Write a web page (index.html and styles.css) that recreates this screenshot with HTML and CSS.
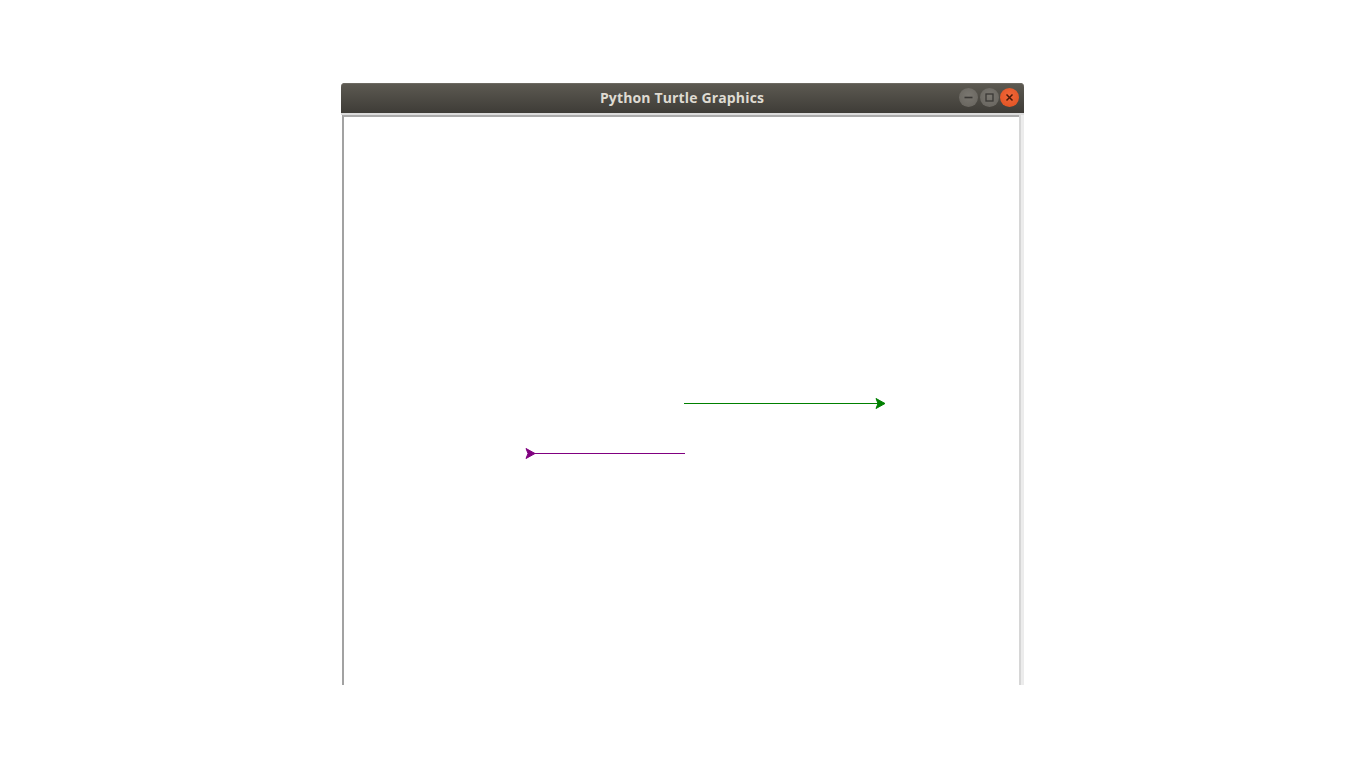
FILE: index.html
```html
<!DOCTYPE html>
<html>
<head>
<meta charset="utf-8">
<title>Python Turtle Graphics</title>
<link rel="stylesheet" href="styles.css">
</head>
<body>
<div class="window">
  <div class="titlebar">
    <span class="title">Python Turtle Graphics</span>
    <div class="controls">
      <span class="btn btn-min"><svg width="19" height="19" viewBox="0 0 19 19"><line x1="5.5" y1="9.5" x2="13.5" y2="9.5" stroke="#3a3835" stroke-width="1.6"/></svg></span>
      <span class="btn btn-max"><svg width="19" height="19" viewBox="0 0 19 19"><rect x="6" y="6" width="7" height="7" fill="none" stroke="#3a3835" stroke-width="1.3"/></svg></span>
      <span class="btn btn-close"><svg width="19" height="19" viewBox="0 0 19 19"><path d="M6.5 6.5 L12.5 12.5 M12.5 6.5 L6.5 12.5" stroke="#4a1a08" stroke-width="1.5"/></svg></span>
    </div>
  </div>
  <div class="body">
    <div class="canvas">
      <svg class="drawing" width="675" height="568" viewBox="0 0 675 568">
        <line x1="340" y1="286.5" x2="534" y2="286.5" stroke="#008000" stroke-width="1"/>
        <polygon points="541,286.5 532,281.5 534,286.5 532,291.5" fill="#008000" stroke="#008000" stroke-width="1"/>
        <line x1="189" y1="336.5" x2="341" y2="336.5" stroke="#800080" stroke-width="1"/>
        <polygon points="191,336.5 182,331.5 184,336.5 182,341.5" fill="#800080" stroke="#800080" stroke-width="1"/>
      </svg>
    </div>
    <div class="scrollstrip"></div>
  </div>
</div>
</body>
</html>
```

FILE: styles.css
```css
html, body {
  margin: 0;
  padding: 0;
  background: #ffffff;
  height: 768px;
  overflow: hidden;
}
body {
  padding: 83px 0 0 341px;
  box-sizing: border-box;
}
.window {
  width: 683px;
  height: 602px;
  display: flex;
  flex-direction: column;
}
.titlebar {
  height: 30px;
  flex: none;
  border-radius: 4px 4px 0 0;
  background: linear-gradient(#5d5a52, #3e3c37);
  box-shadow: inset 0 1px 0 #6d6a62;
  display: flex;
  align-items: center;
  justify-content: center;
  position: relative;
}
.title {
  font-family: "Open Sans", "DejaVu Sans", sans-serif;
  font-weight: bold;
  font-size: 14px;
  color: #dfdbd2;
  letter-spacing: 0.15px;
  margin-right: 1px;
  margin-bottom: 2px;
}
.controls {
  position: absolute;
  right: 5px;
  top: 5px;
  display: flex;
  gap: 1.5px;
}
.btn {
  width: 19px;
  height: 19px;
  border-radius: 50%;
  display: flex;
}
.btn-min, .btn-max {
  background: radial-gradient(circle at 50% 40%, #7a7770, #65625c);
}
.btn-close {
  background: radial-gradient(circle at 50% 40%, #f0673a, #e0501f);
}
.body {
  flex: 1;
  display: flex;
  border-top: 2px solid #dcdcdc;
  min-height: 0;
}
.canvas {
  flex: 1;
  background: #ffffff;
  border-left: 2px solid #a2a2a2;
  border-top: 2px solid #ababab;
  margin-left: 1px;
  overflow: hidden;
}
.drawing {
  display: block;
}
.scrollstrip {
  width: 5px;
  flex: none;
  background: linear-gradient(90deg, #d6d6d6 0, #d6d6d6 2px, #ececec 2px);
}
```
